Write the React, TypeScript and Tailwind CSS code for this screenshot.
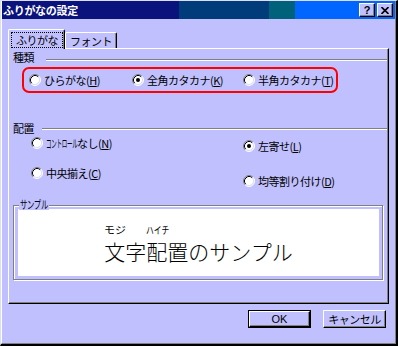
import React from "react";

const T = "text-[11px] leading-[12px] tracking-[-0.5px] whitespace-nowrap";

function Radio({ checked = false }: { checked?: boolean }) {
  return (
    <svg width="12" height="12" viewBox="0 0 12 12" className="shrink-0">
      <circle cx="6" cy="6" r="5" fill="#fff" />
      <path d="M2.11 9.89 A5.5 5.5 0 0 1 9.89 2.11" stroke="#808080" fill="none" />
      <path d="M2.82 9.18 A4.5 4.5 0 0 1 9.18 2.82" stroke="#000" fill="none" />
      <path d="M9.89 2.11 A5.5 5.5 0 0 1 2.11 9.89" stroke="#fff" fill="none" />
      <path d="M9.18 2.82 A4.5 4.5 0 0 1 2.82 9.18" stroke="#dfdfdf" fill="none" />
      {checked && <circle cx="6" cy="6" r="2" fill="#000" />}
    </svg>
  );
}

function Opt({ label, k, checked = false, className = "" }: { label: React.ReactNode; k: string; checked?: boolean; className?: string }) {
  return (
    <div className={"flex items-center gap-[3px] h-[14px] " + className}>
      <Radio checked={checked} />
      <span className={T}>
        {label}(<span className="underline">{k}</span>)
      </span>
    </div>
  );
}

export default function App() {
  return (
    <div className="w-[398px] h-[346px] bg-[#c0c0ff] border-t border-l border-t-[#dcdcff] border-l-[#dcdcff] border-r-2 border-b-2 border-r-black border-b-black font-['Noto_Sans_CJK_JP',sans-serif] text-black">
      <div className="h-full flex flex-col border-l border-l-white border-r border-b border-r-[#808080] border-b-[#808080]">
        {/* title bar */}
        <div className="h-[18px] shrink-0 flex items-center justify-between bg-[linear-gradient(90deg,#0a127c_177px,#003c7a_177px,#003c7a_267px,#00627a_267px,#00627a_293px,#0066ff_293px)]">
          <span className="pl-[1px] text-[11px] leading-[12px] tracking-[-0.3px] font-bold text-white">ふりがなの設定</span>
          <div className="flex gap-[2px] pr-[2px]">
            <div className="w-[16px] h-[14px] bg-[#c0c0ff] border border-t-white border-l-white border-r-black border-b-black shadow-[inset_-1px_-1px_0_#808080] flex items-center justify-center">
              <span className="font-['Liberation_Sans',sans-serif] font-bold text-[11px] leading-none">?</span>
            </div>
            <div className="w-[16px] h-[14px] bg-[#c0c0ff] border border-t-white border-l-white border-r-black border-b-black shadow-[inset_-1px_-1px_0_#808080] flex items-center justify-center">
              <svg width="8" height="7" viewBox="0 0 8 7">
                <path d="M0.5 0 L7.5 7 M7.5 0 L0.5 7" stroke="#000" strokeWidth="1.6" />
              </svg>
            </div>
          </div>
        </div>

        {/* body */}
        <div className="flex-1 flex flex-col pl-[6px] pt-[10px]">
          {/* tabs */}
          <div className="flex items-end h-[19px]">
            <div className="relative z-10 w-[57px] h-[20px] mb-[-1px] bg-[#c0c0ff] border-t border-l border-t-white border-l-white border-r border-r-black rounded-t-[2px] shadow-[inset_-1px_0_0_#808080]">
              <div className={"ml-[2px] mt-[2px] w-[52px] h-[16px] border border-dotted border-black flex items-center justify-center " + T}>
                ふりがな
              </div>
            </div>
            <div className="w-[52px] h-[16px] bg-[#c0c0ff] border-t border-l border-t-white border-l-white border-r border-r-black rounded-t-[2px] shadow-[inset_-1px_0_0_#808080] flex items-center justify-center pt-[1px]">
              <span className={T}>フォント</span>
            </div>
          </div>

          {/* panel */}
          <div className="w-[381px] h-[256px] border-t border-l border-t-white border-l-white border-r border-b border-r-black border-b-black">
            <div className="h-full flex flex-col border-r border-b border-r-[#808080] border-b-[#808080]">
              {/* 種類 */}
              <div className="flex items-start h-[12px] mt-[2px] pl-[4px]">
                <span className={T}>種類</span>
                <div className="flex-1 ml-[12px] mt-[8px] h-[2px] border-t border-b border-t-[#808080] border-b-white" />
              </div>
              <div className="ml-[13px] mt-[4px] w-[316px] h-[26px] border-2 border-[#ff0000] rounded-[7px] flex items-center pl-[5px]">
                <Opt label="ひらがな" k="H" className="w-[103px]" />
                <Opt label="全角カタカナ" k="K" checked className="w-[111px]" />
                <Opt label="半角カタカナ" k="T" />
              </div>

              {/* 配置 */}
              <div className="flex items-start h-[12px] mt-[29px] pl-[4px]">
                <span className={T}>配置</span>
                <div className="flex-1 ml-[8px] mt-[6px] h-[2px] border-t border-b border-t-[#808080] border-b-white" />
              </div>
              <div className="flex pl-[22px]">
                <div className="w-[212px] flex flex-col">
                  <Opt
                    label={
                      <>
                        <span className="inline-block w-[31px]">
                          <span className="inline-block origin-left scale-x-50">コントロール</span>
                        </span>
                        なし
                      </>
                    }
                    k="N"
                    className="mt-[2px]"
                  />
                  <Opt label="中央揃え" k="C" className="mt-[16px]" />
                </div>
                <div className="flex flex-col">
                  <Opt label="左寄せ" k="L" checked className="mt-[5px]" />
                  <Opt label="均等割り付け" k="D" className="mt-[21px]" />
                </div>
              </div>

              {/* サンプル */}
              <div className="relative mt-[17px] ml-[4px] w-[370px] h-[75px] border border-[#808080] shadow-[1px_1px_0_#fff,inset_1px_1px_0_#fff]">
                <span className={"absolute left-[5px] top-[-8px] px-[1px] bg-[#c0c0ff] " + T}>
                  <span className="inline-block w-[28px]">
                    <span className="inline-block origin-left scale-x-[0.67]">サンプル</span>
                  </span>
                </span>
                <div className="ml-[4px] mt-[3px] w-[361px] h-[67px] bg-white flex justify-center">
                  <div className="pt-[15px] flex flex-col">
                    <div className="flex text-[10px] leading-[12px] whitespace-nowrap">
                      <span className="w-[42px]">
                        <span className="inline-block origin-left scale-x-[1.1]">モジ</span>
                      </span>
                      <span className="inline-block origin-left scale-x-[0.78]">ハイチ</span>
                    </div>
                    <div className="mt-[4px] text-[21px] leading-[22px] font-light whitespace-nowrap">文字配置のサンプル</div>
                  </div>
                </div>
              </div>
            </div>
          </div>

          {/* buttons */}
          <div className="flex justify-end gap-[12px] mt-[6px] pr-[9px]">
            <div className="w-[63px] h-[18px] border border-black">
              <div className="h-full border border-t-white border-l-white border-r-black border-b-black shadow-[inset_-1px_-1px_0_#808080] flex items-center justify-center">
                <span className="font-['Liberation_Sans',sans-serif] text-[11px] leading-none">OK</span>
              </div>
            </div>
            <div className="w-[63px] h-[18px] border border-t-white border-l-white border-r-black border-b-black shadow-[inset_-1px_-1px_0_#808080] flex items-center justify-center">
              <span className={T}>キャンセル</span>
            </div>
          </div>
        </div>
      </div>
    </div>
  );
}
